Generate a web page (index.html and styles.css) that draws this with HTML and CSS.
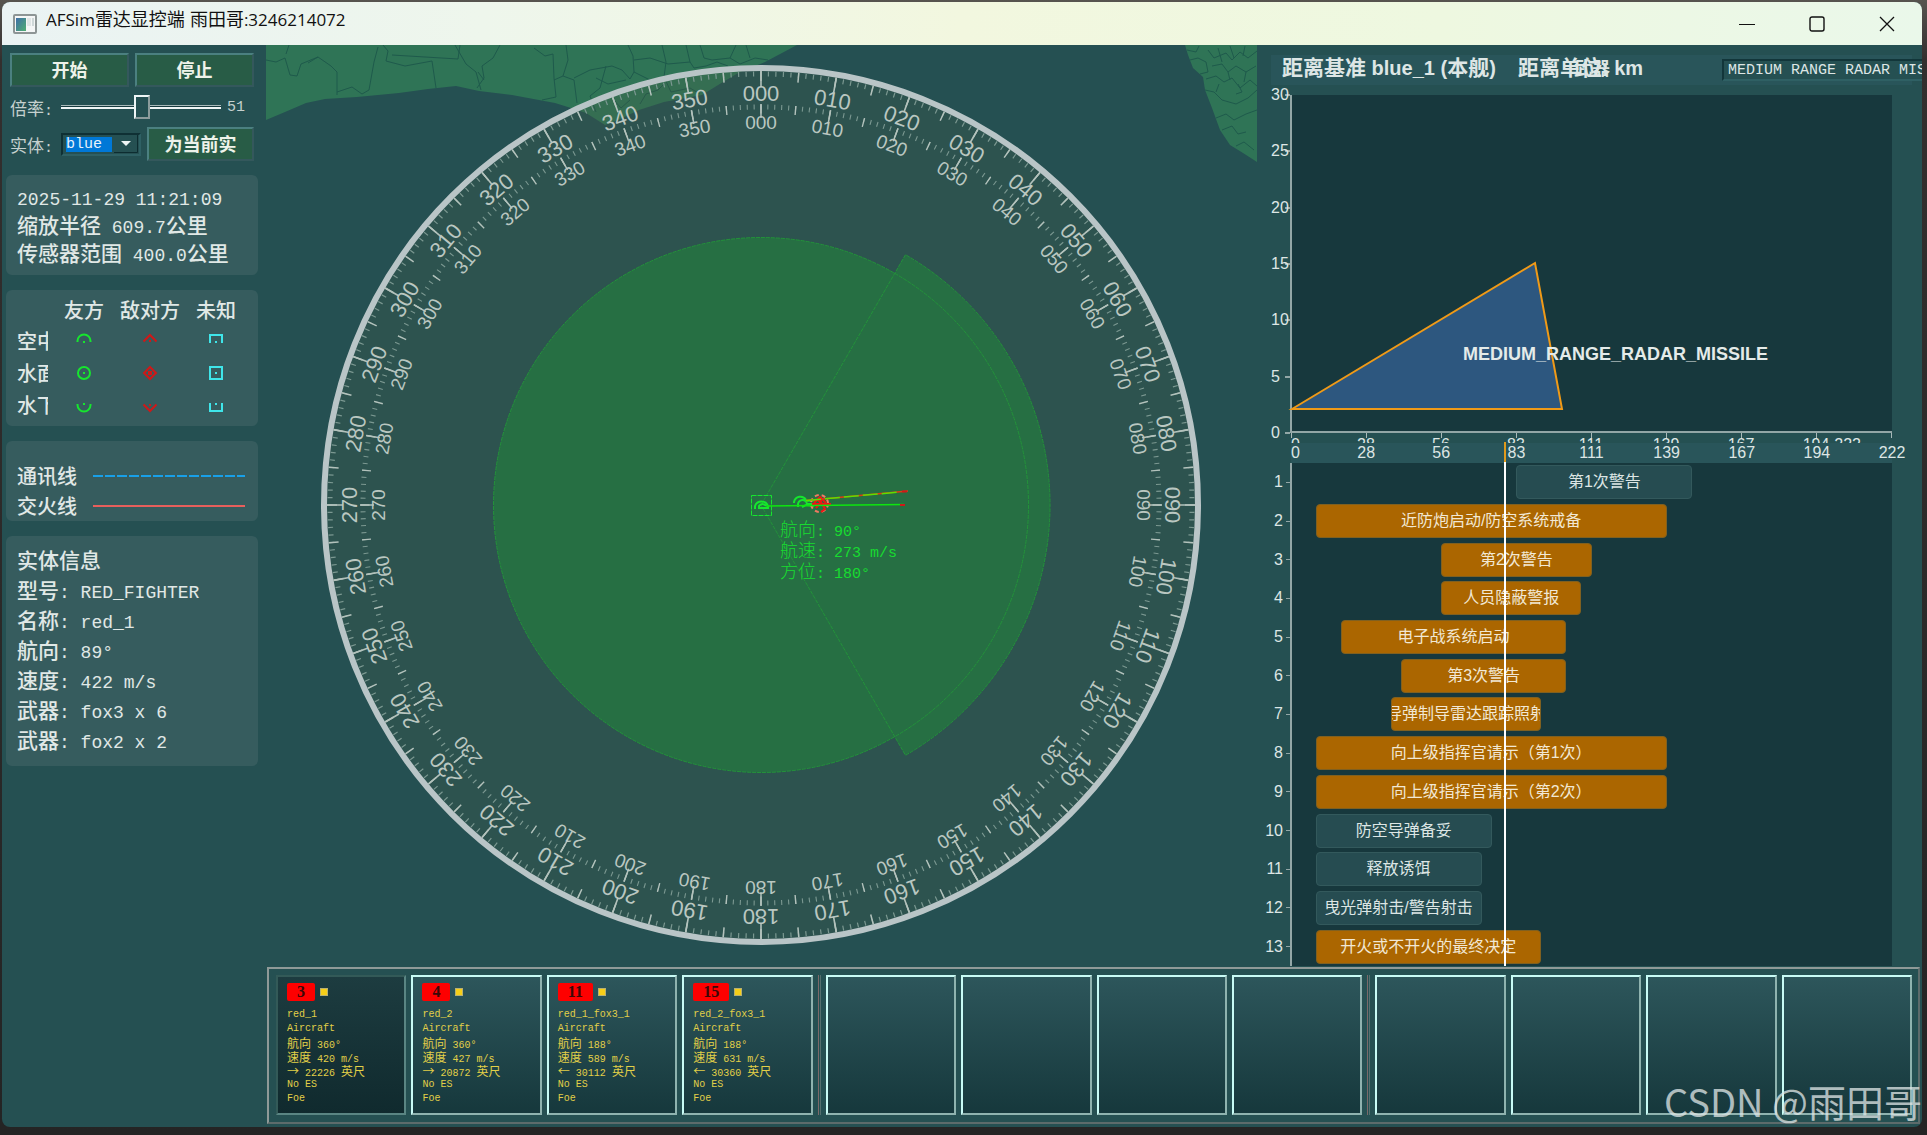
FILE: index.html
```html
<!DOCTYPE html>
<html lang="zh-CN">
<head>
<meta charset="utf-8">
<title>AFSim雷达显控端</title>
<link rel="stylesheet" href="styles.css">
</head>
<body>
<div class="window">
  <header class="titlebar">
    <svg class="app-icon" width="24" height="20" viewBox="0 0 24 20" aria-hidden="true">
      <defs><linearGradient id="ig" x1="0" y1="0" x2="1" y2="1"><stop offset="0" stop-color="#3f6fa8"/><stop offset="1" stop-color="#4fae72"/></linearGradient></defs>
      <rect x="1" y="1" width="22" height="18" rx="1" fill="#f4f6f6" stroke="#8d9595" stroke-width="2"/>
      <rect x="3" y="4" width="10" height="13" fill="url(#ig)"/>
      <rect x="14" y="4" width="4" height="8" fill="#dfe5e5"/><rect x="19" y="4" width="2" height="8" fill="#cfd8d8"/>
    </svg>
    <h1><span class="seg">AFSim</span>雷达显控端 雨田哥<span class="seg">:3246214072</span></h1>
    <div class="win-controls">
      <button type="button" aria-label="最小化"><svg width="16" height="16"><path d="M0 8.5H16" stroke="#111"/></svg></button>
      <button type="button" aria-label="最大化"><svg width="16" height="16"><rect x="1" y="1" width="14" height="14" rx="2" fill="none" stroke="#111" stroke-width="1.4"/></svg></button>
      <button type="button" aria-label="关闭"><svg width="16" height="16"><path d="M1 1L15 15M15 1L1 15" stroke="#111" stroke-width="1.3"/></svg></button>
    </div>
  </header>

  <div class="body">
    <aside class="sidebar">
      <div class="controls">
        <div class="row"><button class="btn" type="button">开始</button><button class="btn" type="button">停止</button></div>
        <div class="row slider-row">
          <label for="rate">倍率<span class="m15">:</span></label>
          <input id="rate" class="slider" type="range" min="0" max="100" value="51">
          <output class="m15" for="rate">51</output>
        </div>
        <div class="row entity-row">
          <label for="entity">实体<span class="m15">:</span></label>
          <span class="combo">
            <select id="entity"><option>blue</option></select>
            <svg width="24" height="18" viewBox="0 0 24 18" aria-hidden="true"><path d="M0 17.500H23.500V0" fill="none" stroke="#0d2c30"/><path d="M7 6H17L12 11Z" fill="#eef4f4"/></svg>
          </span>
          <button class="btn clip" type="button">为当前实</button>
        </div>
      </div>

      <section class="panel status">
        <p><span class="m18">2025-11-29 11:21:09</span></p>
        <p>缩放半径<span class="m18"> 609.7</span>公里</p>
        <p>传感器范围<span class="m18"> 400.0</span>公里</p>
      </section>

      <section class="panel legend">
        <table>
          <tr><td></td><th>友方</th><th>敌对方</th><th>未知</th></tr>
          <tr><th><span>空中</span></th>
            <td><svg width="16" height="16"><path class="f" d="M1.500 9V8A6.500 6.500 0 0 1 14.500 8V9"/><rect x="7" y="8" width="2" height="2" fill="#16e62e"/></svg></td>
            <td><svg width="16" height="16"><path class="h" d="M1.500 8.500L8 2L14.500 8.500"/><rect x="7" y="7" width="2" height="2" fill="#d01818"/></svg></td>
            <td><svg width="16" height="16"><path class="u" d="M2 10V2H14V10"/><rect x="7" y="8" width="2" height="2" fill="#3fe6ea"/></svg></td></tr>
          <tr><th><span>水面</span></th>
            <td><svg width="16" height="16"><circle class="f" cx="8" cy="8" r="6"/><rect x="7" y="7" width="2" height="2" fill="#16e62e"/></svg></td>
            <td><svg width="16" height="16"><path class="h" d="M8 2L14 8L8 14L2 8Z"/><rect x="6" y="6" width="4" height="4"/></svg></td>
            <td><svg width="16" height="16"><rect class="u" x="2" y="2" width="12" height="12"/><rect x="7" y="7" width="2" height="2" fill="#3fe6ea"/></svg></td></tr>
          <tr><th><span>水下</span></th>
            <td><svg width="16" height="16"><path class="f" d="M1.500 7V8A6.500 6.500 0 0 0 14.500 8V7"/><rect x="7" y="6" width="2" height="2" fill="#16e62e"/></svg></td>
            <td><svg width="16" height="16"><path class="h" d="M1.500 7.500L8 14L14.500 7.500"/><rect x="7" y="7" width="2" height="2" fill="#d01818"/></svg></td>
            <td><svg width="16" height="16"><path class="u" d="M2 6V14H14V6"/><rect x="7" y="6" width="2" height="2" fill="#3fe6ea"/></svg></td></tr>
        </table>
      </section>

      <section class="panel lines">
        <p>通讯线<i class="comm"></i></p>
        <p>交火线<i class="fire"></i></p>
      </section>

      <section class="panel entity">
        <p>实体信息</p>
        <p>型号<span class="m18">: RED_FIGHTER</span></p>
        <p>名称<span class="m18">: red_1</span></p>
        <p>航向<span class="m18">: 89°</span></p>
        <p>速度<span class="m18">: 422 m/s</span></p>
        <p>武器<span class="m18">: fox3 x 6</span></p>
        <p>武器<span class="m18">: fox2 x 2</span></p>
      </section>
    </aside>

    <main class="content">
      <div class="upper">
        <svg class="scope" viewBox="266 45 991 921" preserveAspectRatio="xMidYMin meet">
          <g class="land">
            <path d="M266 45V120L285 112L306 103L325 99L357 97L399 93L428 89L456 86L479 91L512 95L555 103L571 108L586 113L605 125L618 120L639 110L664 102L702 95L723 82L740 72L765 62L782 53L797 45Z"/>
            <path d="M1185 45L1188 55L1193 68L1203 77L1205 90L1212 108L1220 130L1230 145L1243 153L1257 162V45Z"/>
          </g>
          <g class="borders">
            <path d="M266 60L276 62L285 58L290 75L297 76L301 64L318 57L331 66L337 72V95M289 45L286 54M318 57L308 63M337 92L352 87L362 94L369 90L374 62L378 47"/>
            <path d="M383 45L388 51L386 61L405 66L432 61L436 88M392 55L458 59L460 45M455 45L466 64L476 72L481 90M477 88L484 78L482 66L493 58L500 45M478 72L484 80"/>
            <path d="M534 48L545 56L553 54L554 78L556 97L542 100M554 80L563 76L574 80L577 103M563 76L568 60L566 45M574 78L590 70L612 66L622 70L630 79L634 72L633 56L628 45M634 72L650 80L664 77L671 92"/>
            <path d="M634 60L650 58L668 64L690 62L694 68M664 77L666 62L662 45M690 62L686 45M700 45L704 58L712 60L730 58M694 68L706 66L717 62L728 66M730 58L736 45M730 58L740 64L755 58L768 60M746 45L750 58M606 66L600 88L590 96L596 112M612 98L621 108L630 100M640 104L646 94L658 90L664 84M671 92L690 88L700 94M596 78L608 84L626 80"/>
            <path d="M1187 50L1196 52L1199 46M1190 60L1198 58L1206 62L1208 72L1200 74M1208 50L1214 58L1226 53L1232 60L1240 52L1248 58L1257 51M1212 66L1222 64L1228 72L1236 66L1246 72L1256 66M1206 79L1216 76L1224 82L1232 78L1240 88L1250 80L1257 86M1205 90L1214 92L1222 100L1236 104L1248 98L1257 90M1238 84L1242 92L1236 94M1216 118L1226 114L1234 120L1246 114L1257 110M1222 130L1232 126L1238 134L1246 132M1236 146L1244 142L1254 150M1218 48L1222 62M1230 46L1234 58M1245 46L1243 56M1228 72L1230 80M1246 72L1244 82M1219 84L1216 92"/>
          </g>
          <circle class="dial" cx="761" cy="505" r="437"/>
          <circle class="range" cx="761" cy="505" r="267.500"/>
          <path class="range" d="M761 505L905.500 254.700A289 289 0 0 1 905.500 755.300Z"/>
          <circle class="edge" cx="761" cy="505" r="267.500"/>
          <path class="edge" d="M761 505L905.500 254.700A289 289 0 0 1 905.500 755.300Z"/>
          <g class="ticks">
            <circle class="minor" cx="761" cy="505" r="431" stroke-width="5" pathLength="360" stroke-dasharray="0.16 0.84" stroke-dashoffset="0.08"/>
            <circle cx="761" cy="505" r="429" stroke-width="10" pathLength="360" stroke-dasharray="0.2 4.8" stroke-dashoffset="0.1"/>
            <circle cx="761" cy="505" r="426" stroke-width="16" pathLength="360" stroke-dasharray="0.22 9.78" stroke-dashoffset="0.11"/>
            <circle class="minor" cx="761" cy="505" r="398" stroke-width="5" pathLength="360" stroke-dasharray="0.16 0.84" stroke-dashoffset="0.08"/>
            <circle cx="761" cy="505" r="396" stroke-width="9" pathLength="360" stroke-dasharray="0.2 4.8" stroke-dashoffset="0.1"/>
            <circle cx="761" cy="505" r="394" stroke-width="14" pathLength="360" stroke-dasharray="0.22 9.78" stroke-dashoffset="0.11"/>
          </g>
          <g id="bearings"></g>
          <g class="tracks">
            <rect x="751.500" y="495.500" width="20" height="20" stroke="#16e62e" stroke-dasharray="5 1"/>
            <path d="M755 509V506A7 7 0 0 1 768 506V508M759 509V506A4 4 0 0 1 766 506M760 508H769" stroke="#16e62e" stroke-width="2"/>
            <path d="M794 503V502A6.500 6.500 0 0 1 806 500M798 507V505A4 4 0 0 1 807 504L812 504M802 507L806 505L814 506M806 501L818 500" stroke="#16e62e" stroke-width="2"/>
            <circle cx="819.500" cy="503.500" r="8.500" stroke="#f07a62" stroke-width="2" stroke-dasharray="4 3"/>
            <path d="M814 503L820 497L826 503M816 508L821 502L825 509L821 512M812 504H831M817 499L825 507M821 497V506" stroke="#f01414" stroke-width="2"/>
            <path d="M766 506L904 504.500" stroke="#0ee60e" stroke-width="1.500"/>
            <path d="M806 500.500L908 491" stroke="#e03a12" stroke-width="1.500"/>
            <path d="M806 500.500L900 492" stroke="#5be000" stroke-width="1.500" stroke-dasharray="15 4"/>
            <path d="M900 505H905M902 491.500H907" stroke="#d01818" stroke-width="2"/>
          </g>
          <g class="readout">
            <text x="780" y="536">航向<tspan class="m15">: 90°</tspan></text>
            <text x="780" y="557">航速<tspan class="m15">: 273 m/s</tspan></text>
            <text x="780" y="578">方位<tspan class="m15">: 180°</tspan></text>
          </g>
        </svg>

        <section class="charts">
          <header class="chart-head">
            <p><span class="zh">距离基准</span> blue_1 (<span class="zh">本舰</span>)    <span class="zh">距离单位</span>: km</p>
            <label for="weapon">武器</label>
            <select id="weapon" class="m15"><option>MEDIUM RANGE RADAR MISSILE</option></select>
          </header>

          <div class="envelope">
            <ul class="y-axis"><li>30</li><li>25</li><li>20</li><li>15</li><li>10</li><li>5</li><li>0</li></ul>
            <svg viewBox="0 0 600 336" preserveAspectRatio="none">
              <path d="M0 314L243 168L270 314Z" fill="#2d577f" stroke="#f09a17" stroke-width="2"/>
              <text x="171" y="265">MEDIUM_RANGE_RADAR_MISSILE</text>
            </svg>
          </div>
          <ul class="x-axis cut"><li>0</li><li>28</li><li>56</li><li>83</li><li>111</li><li>139</li><li>167</li><li>194</li><li><span>222</span></li></ul>
          <ul class="x-axis strip"><li>0</li><li>28</li><li>56</li><li>83</li><li>111</li><li>139</li><li>167</li><li>194</li><li>222</li></ul>

          <div class="gantt">
            <ul class="rows"><li>1</li><li>2</li><li>3</li><li>4</li><li>5</li><li>6</li><li>7</li><li>8</li><li>9</li><li>10</li><li>11</li><li>12</li><li>13</li></ul>
            <ul class="bars">
              <li><span class="bar" style="margin-left:37.500%;width:29.300%">第1次警告</span></li>
              <li><span class="bar on" style="margin-left:4.100%;width:58.400%">近防炮启动/防空系统戒备</span></li>
              <li><span class="bar on" style="margin-left:25%;width:25%">第2次警告</span></li>
              <li><span class="bar on" style="margin-left:25%;width:23.300%">人员隐蔽警报</span></li>
              <li><span class="bar on" style="margin-left:8.300%;width:37.500%">电子战系统启动</span></li>
              <li><span class="bar on" style="margin-left:18.300%;width:27.500%">第3次警告</span></li>
              <li><span class="bar on" style="margin-left:16.600%;width:25%">导弹制导雷达跟踪照射</span></li>
              <li><span class="bar on" style="margin-left:4.100%;width:58.400%">向上级指挥官请示（第1次）</span></li>
              <li><span class="bar on" style="margin-left:4.100%;width:58.400%">向上级指挥官请示（第2次）</span></li>
              <li><span class="bar" style="margin-left:4.100%;width:29.300%">防空导弹备妥</span></li>
              <li><span class="bar" style="margin-left:4.100%;width:27.600%">释放诱饵</span></li>
              <li><span class="bar" style="margin-left:4.100%;width:27.600%">曳光弹射击/警告射击</span></li>
              <li><span class="bar on" style="margin-left:4.100%;width:37.500%">开火或不开火的最终决定</span></li>
            </ul>
          </div>
        </section>
      </div>

      <section class="targets">
        <article class="cell first">
          <h2><b>3</b><i></i></h2>
          <p>red_1</p><p>Aircraft</p><p><em>航向</em> 360°</p><p><em>速度</em> 420 m/s</p><p><em>→</em> 22226 <em>英尺</em></p><p>No ES</p><p>Foe</p>
        </article>
        <article class="cell">
          <h2><b>4</b><i></i></h2>
          <p>red_2</p><p>Aircraft</p><p><em>航向</em> 360°</p><p><em>速度</em> 427 m/s</p><p><em>→</em> 20872 <em>英尺</em></p><p>No ES</p><p>Foe</p>
        </article>
        <article class="cell">
          <h2><b>11</b><i></i></h2>
          <p>red_1_fox3_1</p><p>Aircraft</p><p><em>航向</em> 188°</p><p><em>速度</em> 589 m/s</p><p><em>←</em> 30112 <em>英尺</em></p><p>No ES</p><p>Foe</p>
        </article>
        <article class="cell">
          <h2><b>15</b><i></i></h2>
          <p>red_2_fox3_1</p><p>Aircraft</p><p><em>航向</em> 188°</p><p><em>速度</em> 631 m/s</p><p><em>←</em> 30360 <em>英尺</em></p><p>No ES</p><p>Foe</p>
        </article>
        <span class="divider"></span>
        <article class="cell"></article><article class="cell"></article><article class="cell"></article><article class="cell"></article>
        <span class="divider"></span>
        <article class="cell"></article><article class="cell"></article><article class="cell"></article><article class="cell"></article>
      </section>
    </main>
  </div>
  <p class="watermark">CSDN @雨田哥</p>
</div>
<script src="scope.js"></script>
</body>
</html>
```
FILE: styles.css
```css
* { box-sizing: border-box; margin: 0; padding: 0; }
ul { list-style: none; }
body { background: linear-gradient(#57544f, #332f2e 60px, #242424); font-family: "Liberation Sans", "Noto Sans CJK SC", sans-serif; }
button, input, select { font: inherit; color: inherit; }

.window { position: relative; display: flex; flex-direction: column; min-height: calc(100vh - 10px); margin: 2px 5px 8px 2px; background: #255052; border-radius: 8px; overflow: hidden; }
.m18 { font-family: "Liberation Mono", monospace; font-size: 18px; white-space: pre; }
.m15 { font-family: "Liberation Mono", monospace; font-size: 15px; }

/* title bar */
.titlebar { display: flex; align-items: center; height: 43px; padding-left: 11px; background: linear-gradient(90deg, #eaf3f3, #eef6ec 25%, #f2f7df 50%, #eef8e0 75%, #eaf8ea); color: #111; }
.titlebar h1 { height: 28px; margin-left: 9px; font-size: 18px; font-weight: 400; line-height: 20px; }
.seg { font-family: "Open Sans", sans-serif; font-size: 17px; }
.win-controls { display: flex; margin-left: auto; }
.win-controls button { display: flex; align-items: center; justify-content: center; width: 70px; height: 43px; border: 0; background: none; }

.body { flex: 1; display: flex; }

/* sidebar */
.sidebar { display: flex; flex-direction: column; gap: 15px; width: 264px; flex: none; padding: 8px 8px 0 4px; font-family: "Noto Sans CJK SC", sans-serif; color: #e0e8e6; }
.controls { padding: 0 4px; height: 107px; color: #c6d1cf; font-size: 17px; }
.row { display: flex; align-items: center; }
.row .btn + .btn { margin-left: 6px; }
.btn { flex: 1; height: 34px; padding-bottom: 2px; border: 2px solid; border-color: #4b8080 #34585c #34585c #4b8080; background: #285c46; color: #eef3ea; font-size: 18px; font-weight: 700; line-height: 20px; }
.btn.clip { flex: 0 0 107px; margin-left: auto; overflow: hidden; white-space: nowrap; }
.slider-row { height: 40px; }
.slider-row label, .entity-row label { width: 51px; }
.slider { -webkit-appearance: none; appearance: none; width: 160px; height: 24px; background: linear-gradient(#a9baba 0 1px, #173a3e 1px 2px, #f0f6f6 2px 4px) 0 10px / 100% 4px no-repeat; }
.slider::-webkit-slider-thumb { -webkit-appearance: none; width: 16px; height: 24px; background: #255052; border: 2px solid; border-color: #eef6f6 #8c9c9c #8c9c9c #eef6f6; }
.slider-row output { margin-left: 6px; }
.combo { display: flex; align-items: center; width: 80px; height: 23px; border: 2px solid; border-color: #0f3034 #2f6064 #2f6064 #0f3034; }
.combo select { -webkit-appearance: none; appearance: none; width: 51px; height: 19px; border: 0; padding-left: 3px; background: linear-gradient(#0078d7, #0078d7) 3px 2px / 46px 15px no-repeat; color: #e8f2fb; font-family: "Liberation Mono", monospace; font-size: 15px; }

.panel { padding: 0 11px; background: #365c5e; border-radius: 6px; font-size: 20px; font-weight: 500; }
.status { height: 100px; padding-top: 7px; line-height: 28px; }
.status p { height: 28px; font-size: 21px; }
.legend { height: 136px; padding-top: 5px; }
.legend table { border-collapse: collapse; table-layout: fixed; width: 232px; }
.legend tr { height: 32px; }
.legend tr:first-child { height: 30px; }
.legend th { width: 66px; font-weight: 500; line-height: 28px; white-space: nowrap; }
.legend tr > :first-child { width: 34px; text-align: left; }
.legend th span { display: block; width: 31px; overflow: hidden; }
.legend td { text-align: center; }
.legend svg { display: block; margin: 0 auto; }
.legend svg * { fill: none; stroke-width: 2; }
.legend svg rect:last-child { fill: currentColor; }
.legend td:nth-child(2) { color: #16e62e; }
.legend td:nth-child(3) { color: #d01818; }
.legend td:nth-child(4) { color: #3fe6ea; }
.f { stroke: #16e62e; }
.h { stroke: #d01818; }
.u { stroke: #3fe6ea; }
.lines { height: 80px; padding-top: 20px; line-height: 30px; }
.lines p { display: flex; align-items: center; justify-content: space-between; padding-right: 2px; }
.lines i { width: 152px; height: 2px; }
.comm { background: repeating-linear-gradient(90deg, #18a0e8 0 10px, transparent 10px 12px); }
.fire { background: #e85f5c; }
.entity { height: 230px; padding-top: 8px; line-height: 30px; }
.entity p { height: 30px; font-size: 21px; }

/* scope */
.content { flex: 1; min-width: 0; display: flex; flex-direction: column; }
.upper { flex: 1; display: flex; }
.scope { flex: 1; min-width: 0; height: auto; }
.land { fill: #2f7456; }
.borders { fill: none; stroke: #1f5a4c; stroke-width: 1; }
.dial { fill: rgba(70, 90, 70, .25); stroke: #b9c5c7; stroke-width: 6; }
.range { fill: #266f43; }
.edge { fill: none; stroke: #23923a; stroke-width: 1; stroke-dasharray: 4 1; }
.ticks { fill: none; stroke: #b3c2bc; }
.ticks .minor { stroke: #7b9891; }
#bearings { fill: #bac7c1; text-anchor: middle; font-family: "Liberation Sans", sans-serif; }
.outer { font-size: 22px; }
.inner { font-size: 19px; }
.tracks { fill: none; }
.readout { fill: #18dc30; font-family: "Noto Sans CJK SC", sans-serif; font-size: 18px; font-weight: 300; white-space: pre; }

/* charts */
.charts { display: flex; flex-direction: column; width: 665px; flex: none; padding: 10px 10px 1px 14px; color: #dde6e5; font-size: 16px; line-height: 20px; }
.chart-head { position: relative; display: flex; align-items: center; height: 30px; margin-bottom: 10px; padding-left: 11px; background: #29555a; font-size: 20px; font-weight: 700; }
.chart-head p { flex: 0 0 440px; height: 24px; white-space: pre; }
.zh { font-size: 21px; }
.chart-head label { position: absolute; left: 303px; top: 4px; font-size: 18px; }
.chart-head select { -webkit-appearance: none; appearance: none; flex: 0 0 260px; height: 22px; padding-left: 4px; border: 2px solid; border-color: #12363a #2f6064 #2f6064 #12363a; border-radius: 0; background: #255052; font-weight: 400; }
.envelope { flex: 2 0 0; display: flex; padding-right: 20px; }
.y-axis { display: flex; flex-direction: column; justify-content: space-between; width: 19px; flex: none; margin: -10px 0; }
.y-axis li { background: linear-gradient(#93a7a7, #93a7a7) right center / 5px 2px no-repeat; }
.envelope svg { flex: 1; min-width: 0; height: 100%; background: #17383d; border-left: 2px solid #93a7a7; border-bottom: 2px solid #93a7a7; overflow: visible; }
.envelope text { fill: #e4ebe9; font-size: 18px; font-weight: 700; }
.x-axis { display: flex; justify-content: space-between; margin: 0 20px; height: 20px; }
.x-axis li { display: flex; justify-content: center; width: 0; }
.x-axis li:first-child { justify-content: flex-start; }
.x-axis.cut { height: 10px; padding-top: 2px; overflow-y: clip; background: repeating-linear-gradient(90deg, #a9b9b9 0 1px, transparent 1px 12.5%) 0 0 / 100% 5px no-repeat; border-right: 1px solid #a9b9b9; border-image: linear-gradient(#a9b9b9 50%, transparent 50%) 1; }
.x-axis.cut li:last-child { justify-content: flex-end; }
.x-axis.cut span { padding-right: 30px; }
.strip { background: #29555a; }
.gantt { flex: 3 0 0; display: flex; padding-right: 20px; }
.gantt ul { display: flex; flex-direction: column; }
.gantt li { flex: 1; display: flex; align-items: center; min-height: 0; }
.rows { width: 20px; flex: none; }
.rows li { justify-content: flex-end; padding-right: 8px; background: linear-gradient(#93a7a7, #93a7a7) right center / 5px 1px no-repeat; }
.bars { position: relative; flex: 1; background: #17383d; box-shadow: -1px 0 #93a7a7, inset 1px 0 #93a7a7; }
.bars::after { content: ""; position: absolute; top: -21px; bottom: 0; left: 35.5%; width: 2px; background: linear-gradient(#e09a1c 20px, #fff 20px); }
.bar { display: flex; align-items: center; justify-content: center; height: 34px; overflow: hidden; white-space: nowrap; border: 1px solid #33595c; border-radius: 4px; background: #264c51; font-weight: 400; }
.bar.on { background: #ab6600; border-color: #806020; color: #f2e8d4; }

/* target strip */
.targets { display: flex; gap: 5px; height: 157px; margin: 0 2px 3px 1px; padding: 6px 6px 7px 7px; border: 2px solid; border-color: #8f9a98 #5d6b6b #5d6b6b #8f9a98; }
.cell { flex: 1 1 0; min-width: 0; padding: 6px 9px; border: 2px solid; border-color: #c8fbf5 #8fb3af #8fb3af #c8fbf5; background: linear-gradient(#2d565b, #16383c); color: #e2d048; font-family: "Liberation Mono", monospace; font-size: 10px; line-height: 14px; white-space: nowrap; }
.cell.first { border-color: #335a58 #5a8583 #5a8583 #335a58; background: linear-gradient(#1d3c40, #102a2e); }
.cell h2 { display: flex; align-items: center; gap: 5px; margin-bottom: 7px; }
.cell b { padding: 0 10px; background: #fe0000; border-radius: 2px; color: #3a0808; font-family: "Liberation Serif", serif; font-size: 16px; line-height: 18px; }
.cell i { width: 8px; height: 8px; background: #f7cf18; border: 1px solid #b8b070; }
.cell em { font-family: "Noto Sans CJK SC", sans-serif; font-size: 12px; font-style: normal; line-height: 14px; }
.cell p { height: 14px; }
.divider { width: 3px; border-left: 1px solid #7a6a6a; border-right: 1px solid #54706f; }

.watermark { position: absolute; right: 0; bottom: 2px; color: rgba(225, 232, 232, .75); font-family: "Noto Sans CJK SC", sans-serif; font-size: 38px; line-height: 48px; white-space: nowrap; }
```
FILE: scope.js
```js
// Bearing labels every ten degrees on the two concentric scales.
const group = document.getElementById('bearings');
const scales = [{ name: 'outer', y: 101 }, { name: 'inner', y: 129 }];
for (const scale of scales) {
  for (let deg = 0; deg < 360; deg += 10) {
    const label = document.createElementNS('http://www.w3.org/2000/svg', 'text');
    label.setAttribute('class', scale.name);
    label.setAttribute('x', 761);
    label.setAttribute('y', scale.y);
    label.setAttribute('transform', `rotate(${deg} 761 505)`);
    label.textContent = String(deg).padStart(3, '0');
    group.append(label);
  }
}
```
